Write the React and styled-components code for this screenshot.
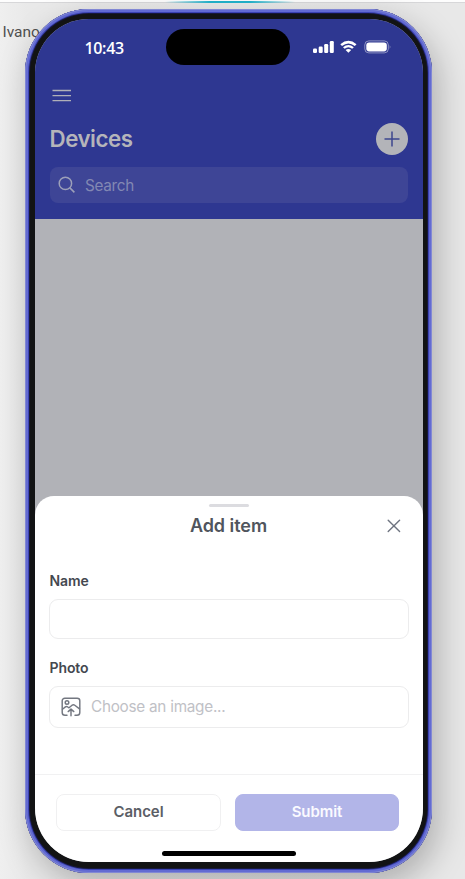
import React from "react";
import styled, { createGlobalStyle } from "styled-components";

const GlobalStyle = createGlobalStyle`
  *, *::before, *::after { box-sizing: border-box; }
  body { margin: 0; background: #e9e9e9; }
  button, input { font: inherit; }
`;

const Page = styled.main`
  position: relative;
  width: 465px;
  height: 879px;
  overflow: hidden;
  padding: 8.5px 0 0 24.5px;
  background: linear-gradient(90deg, #efefef, #e9e9e9 6%, #e8e8e8 92%, #e8e8e8);
  font-family: Inter, "Liberation Sans", sans-serif;
`;

const TopLine = styled.div`
  position: absolute;
  inset: 0 0 auto;
  height: 3px;
  border-bottom: 1px solid #d7d7d9;
  background: #fdfdfd;
  &::after {
    content: "";
    position: absolute;
    left: 165px;
    top: 1px;
    width: 130px;
    height: 2px;
    background: linear-gradient(90deg, transparent, #20b2cb 35%, #20b2cb 65%, transparent);
  }
`;

const Owner = styled.span`
  position: absolute;
  left: 2.5px;
  top: 23px;
  font: 15.5px/18px Roboto, sans-serif;
  color: #505050;
`;

const Phone = styled.section`
  position: relative;
  width: 407.8px;
  height: 864.2px;
  padding: 10.5px 9.8px 10.4px 10px;
  border-radius: 64px;
  background: #121314;
  box-shadow:
    inset 0 0 0 1px #8288d4,
    inset 0 0 0 3px #636bd2,
    inset 0 0 0 4px #3c43b4,
    inset 0 0 0 5px #17183a,
    6px 12px 32px rgba(0, 0, 0, 0.25);
`;

const Screen = styled.div`
  height: 100%;
  overflow: hidden;
  display: flex;
  flex-direction: column;
  border-radius: 54px;
  background: #b1b2b7;
`;

const Header = styled.header`
  flex: 0 0 200px;
  padding: 0 15px;
  background: #2e3791;
  color: #b5b5ba;
`;

const StatusBar = styled.div`
  display: grid;
  grid-template-columns: 116.5px 124px 1fr;
  align-items: center;
  height: 37px;
  margin-top: 9px;
`;

const Time = styled.time`
  padding: 3px 0 0 35px;
  font: 600 16px/20px "Open Sans", "Noto Sans", sans-serif;
  letter-spacing: -0.35px;
  color: #fff;
`;

const Island = styled.div`
  width: 124px;
  height: 36px;
  border-radius: 18px;
  background: #000;
`;

const StatusIcons = styled.svg`
  display: block;
  margin: 1px 0 0 22.5px;
`;

const MenuButton = styled.button`
  display: block;
  width: 20px;
  height: 14px;
  margin: 24px 0 0 2px;
  padding: 0;
  border: 0;
  background: none;
`;

const TitleRow = styled.div`
  display: flex;
  align-items: center;
  justify-content: space-between;
  height: 33px;
  margin-top: 19px;
`;

const Title = styled.h1`
  margin: 0;
  font-size: 22.3px;
  line-height: 32px;
  font-weight: 600;
  letter-spacing: -0.45px;
`;

const AddButton = styled.button`
  display: grid;
  place-items: center;
  width: 32px;
  height: 32px;
  padding: 0;
  border: 0;
  border-radius: 50%;
  background: #b3b4b9;
`;

const Search = styled.div`
  display: flex;
  align-items: center;
  gap: 9px;
  height: 36px;
  margin-top: 12px;
  padding-left: 8.5px;
  border-radius: 8px;
  background: #3e4596;
  color: #8288b3;
  font-size: 15.3px;
  letter-spacing: -0.3px;
`;

const Sheet = styled.section`
  display: flex;
  flex-direction: column;
  height: 366px;
  margin-top: auto;
  border-radius: 19px 19px 0 0;
  background: #fff;
`;

const Grip = styled.div`
  width: 40px;
  height: 3px;
  margin: 8px auto 0;
  border-radius: 2px;
  background: #dcdce0;
`;

const SheetHeader = styled.header`
  display: grid;
  grid-template-columns: 1fr auto 1fr;
  align-items: center;
  height: 28px;
  margin-top: 5px;
  padding-right: 22px;
`;

const SheetTitle = styled.h2`
  grid-column: 2;
  margin: 0 0 0 22px;
  color: #50555d;
  font-size: 18px;
  line-height: 26px;
  font-weight: 600;
  letter-spacing: -0.05px;
`;

const CloseButton = styled.button`
  justify-self: end;
  width: 14px;
  height: 14px;
  padding: 0;
  border: 0;
  background: none;
`;

const Form = styled.div`
  flex: 1;
  padding: 31px 14px 0 14px;
`;

const Field = styled.label`
  display: block;
  height: 87px;
  color: #44484f;
  font-size: 14px;
  line-height: 20px;
  font-weight: 600;
  letter-spacing: -0.1px;
`;

const FieldName = styled.span`
  display: block;
  padding-left: 1px;
`;

const FieldBox = styled.span`
  display: flex;
  align-items: center;
  gap: 10px;
  height: ${({ $height }) => $height}px;
  margin-top: 8px;
  padding-left: 11.5px;
  border: 1.5px solid #ececed;
  border-radius: 9px;
  color: #bfc1c6;
  font-size: 15.3px;
  font-weight: 400;
  letter-spacing: -0.26px;
`;

const Footer = styled.footer`
  display: flex;
  flex-direction: column;
  height: 88px;
  padding-top: 19px;
  border-top: 1px solid #f1f1f2;
`;

const Actions = styled.div`
  display: grid;
  grid-template-columns: 165px 164px;
  gap: 14px;
  padding-left: 21.5px;
`;

const Action = styled.button`
  height: 37px;
  padding: 0 0 2px;
  border: 1.5px solid ${({ $primary }) => ($primary ? "#b2b5e8" : "#f0f0f1")};
  border-radius: 8px;
  background: ${({ $primary }) => ($primary ? "#b2b5e8" : "#fff")};
  color: ${({ $primary }) => ($primary ? "#fafaff" : "#5b5e66")};
  font-size: 15px;
  font-weight: 600;
  letter-spacing: -0.05px;
`;

const HomeIndicator = styled.div`
  width: 134px;
  height: 5px;
  margin: 20px auto 0;
  border-radius: 3px;
  background: #000;
`;

function StatusGlyphs() {
  return (
    <StatusIcons width="80" height="14" viewBox="0 0 80 14" fill="#fff">
      <rect x="0" y="8.5" width="4" height="4.5" rx="1.2" />
      <rect x="5.7" y="6.5" width="4" height="6.5" rx="1.2" />
      <rect x="11.2" y="4" width="4" height="9" rx="1.2" />
      <rect x="16.8" y="1" width="4" height="12" rx="1.2" />
      <path d="M27.3 4.2Q35.4-2.5 43.5 4.2L41.8 6Q35.4 1 29 6ZM30 7.2Q35.4 2.8 40.8 7.2L39.2 8.8Q35.4 5.8 31.6 8.8ZM32.6 10Q35.4 7.8 38.2 10L35.4 12.8Z" />
      <rect x="51.8" y="0.9" width="23.5" height="12" rx="4" fill="none" stroke="#fff" strokeOpacity=".45" />
      <rect x="53.3" y="2.4" width="20.5" height="9" rx="2.8" />
      <path d="M76.7 5Q78.3 7 76.7 9Z" fillOpacity=".45" />
    </StatusIcons>
  );
}

function ImageUploadIcon() {
  return (
    <svg width="20" height="20" viewBox="0 0 20 20" fill="none" stroke="#737780" strokeWidth="1.45" strokeLinecap="round" strokeLinejoin="round">
      <path d="M6 18.2H4A2.8 2.8 0 0 1 1.2 15.4V3.8A2.6 2.6 0 0 1 3.8 1.2H16.2A2.6 2.6 0 0 1 18.8 3.8V15.4A2.8 2.8 0 0 1 16 18.2H14" />
      <circle cx="6" cy="5.5" r="1.8" />
      <path d="M1.5 12.2 4.4 9.9Q5.6 9.1 6.8 10L8 10.8 11.1 8.2Q12.5 7.2 13.8 8.2L18.5 11.8M10 18.8V12.2M7.2 14.6 10 12.1 12.8 14.6" />
    </svg>
  );
}

export default function App() {
  return (
    <>
      <GlobalStyle />
      <Page>
        <TopLine />
        <Owner>Ivano</Owner>
        <Phone>
          <Screen>
            <Header>
              <StatusBar>
                <Time>10:43</Time>
                <Island />
                <StatusGlyphs />
              </StatusBar>
              <MenuButton aria-label="Menu">
                <svg width="20" height="14" viewBox="0 0 20 14" stroke="#b0b0b8" strokeWidth="1.3" display="block">
                  <path d="M0.5 1.5H19M0.5 6.6H19M0.5 11.7H19" />
                </svg>
              </MenuButton>
              <TitleRow>
                <Title>Devices</Title>
                <AddButton aria-label="Add device">
                  <svg width="16" height="16" viewBox="0 0 16 16" stroke="#3d468f" strokeWidth="1.5">
                    <path d="M8 0.5V15.5M0.5 8H15.5" />
                  </svg>
                </AddButton>
              </TitleRow>
              <Search>
                <svg width="18" height="18" viewBox="0 0 18 18" fill="none" stroke="#9da0b9" strokeWidth="1.5">
                  <circle cx="7.4" cy="7.4" r="6.2" />
                  <path d="m11.9 11.9 4.5 4.5" />
                </svg>
                Search
              </Search>
            </Header>
            <Sheet>
              <Grip />
              <SheetHeader>
                <SheetTitle>Add item</SheetTitle>
                <CloseButton aria-label="Close">
                  <svg width="14" height="14" viewBox="0 0 14 14" display="block" stroke="#6e7480" strokeWidth="1.4" strokeLinecap="round">
                    <path d="m1.2 1.2 11.4 11.4M12.6 1.2 1.2 12.6" />
                  </svg>
                </CloseButton>
              </SheetHeader>
              <Form>
                <Field>
                  <FieldName>Name</FieldName>
                  <FieldBox $height={40} />
                </Field>
                <Field>
                  <FieldName>Photo</FieldName>
                  <FieldBox $height={42}>
                    <ImageUploadIcon />
                    Choose an image...
                  </FieldBox>
                </Field>
              </Form>
              <Footer>
                <Actions>
                  <Action>Cancel</Action>
                  <Action $primary>Submit</Action>
                </Actions>
                <HomeIndicator />
              </Footer>
            </Sheet>
          </Screen>
        </Phone>
      </Page>
    </>
  );
}
